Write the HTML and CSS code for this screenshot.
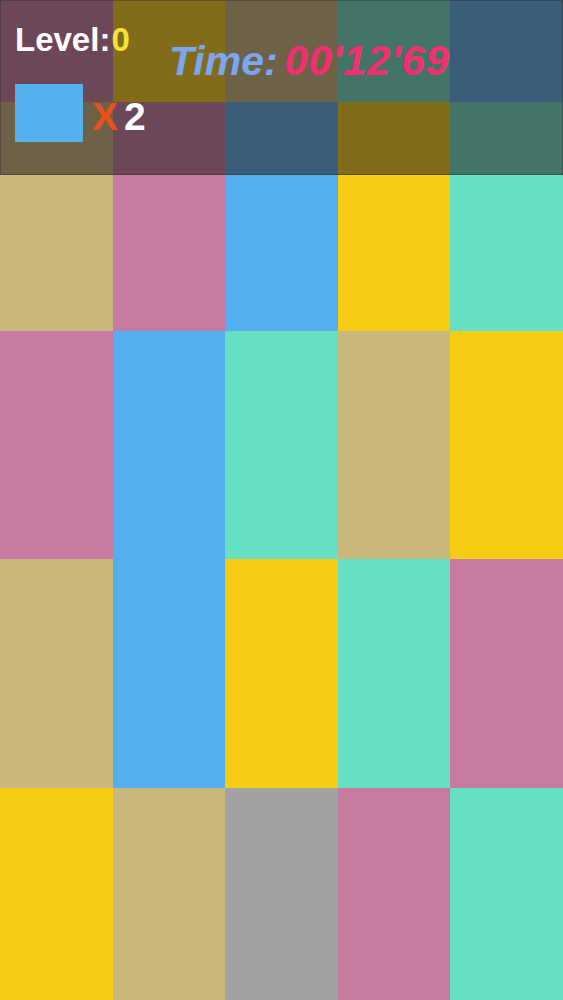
FILE: index.html
```html
<!DOCTYPE html>
<html>
<head>
<meta charset="utf-8">
<link rel="stylesheet" href="styles.css">
</head>
<body>
<div class="screen">
  <div class="board">
    <div class="cell pink"></div><div class="cell yellow"></div><div class="cell tan"></div><div class="cell teal"></div><div class="cell blue"></div>
    <div class="cell tan"></div><div class="cell pink"></div><div class="cell blue"></div><div class="cell yellow"></div><div class="cell teal"></div>
    <div class="cell pink"></div><div class="cell blue"></div><div class="cell teal"></div><div class="cell tan"></div><div class="cell yellow"></div>
    <div class="cell tan"></div><div class="cell blue"></div><div class="cell yellow"></div><div class="cell teal"></div><div class="cell pink"></div>
    <div class="cell yellow"></div><div class="cell tan"></div><div class="cell gray"></div><div class="cell pink"></div><div class="cell teal"></div>
  </div>
  <div class="hud">
    <div class="hud-left">
      <div class="level">Level:<span class="level-num">0</span></div>
      <div class="target">
        <div class="swatch"></div>
        <span class="times">X</span><span class="count">2</span>
      </div>
    </div>
    <div class="time">Time:<span class="time-num">00'12'69</span></div>
  </div>
</div>
</body>
</html>
```
FILE: styles.css
```css
html, body {
  margin: 0;
  padding: 0;
  background: #c9b77c;
}
body {
  font-family: "Liberation Sans", Arial, sans-serif;
  width: 563px;
  height: 1000px;
  overflow: hidden;
}
.screen {
  position: relative;
  width: 563px;
  height: 1000px;
  overflow: hidden;
}
.board {
  display: grid;
  grid-template-columns: repeat(5, 1fr);
  grid-auto-rows: 228.6px;
  margin-top: -126.6px;
}
.pink { background: #c67a9f; }
.yellow { background: #f7cd14; }
.tan { background: #c9b77c; }
.teal { background: #66e0c3; }
.blue { background: #55aeee; }
.gray { background: #a3a2a3; }

.hud {
  position: absolute;
  top: 0;
  left: 0;
  width: 561px;
  height: 173px;
  background: rgba(38, 32, 30, 0.56);
  border: 1px solid rgba(50, 50, 50, 0.5);
  display: flex;
}
.hud-left {
  width: 154px;
  padding-left: 14px;
  padding-top: 22px;
  display: flex;
  flex-direction: column;
}
.level {
  font-weight: bold;
  font-size: 33px;
  line-height: 33px;
  color: #ffffff;
  white-space: nowrap;
}
.level-num { color: #f4e23c; margin-left: 1px; }
.target {
  margin-top: 28px;
  display: flex;
  align-items: center;
  height: 58px;
}
.swatch {
  width: 68px;
  height: 58px;
  background: #55b0ee;
  margin-right: 9px;
}
.times, .count {
  font-weight: bold;
  font-size: 39px;
  line-height: 39px;
  margin-top: 6px;
}
.times { color: #e8501c; margin-right: 6px; }
.count { color: #ffffff; }
.time {
  padding-top: 39px;
  font-weight: bold;
  font-style: italic;
  font-size: 41px;
  line-height: 41px;
  color: #7ba6f2;
  white-space: nowrap;
}
.time-num {
  color: #f42f6f;
  margin-left: 7px;
  font-size: 42px;
  letter-spacing: 0.6px;
}
```
